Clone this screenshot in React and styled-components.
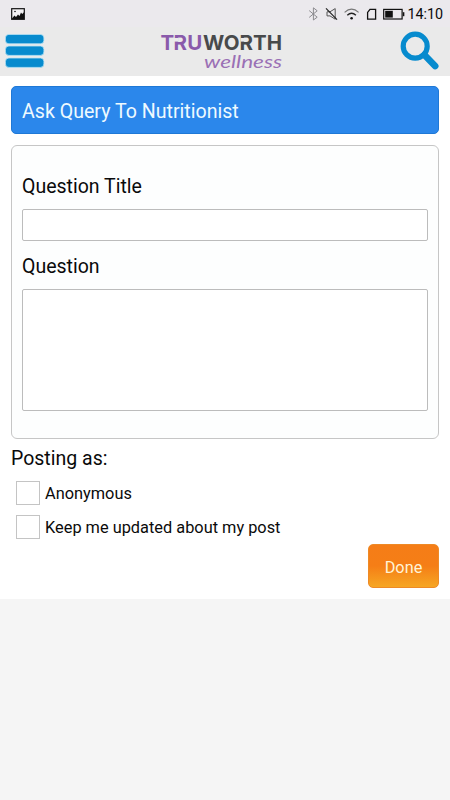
import React, { Component } from "react";
import styled, { createGlobalStyle } from "styled-components";

const GlobalStyle = createGlobalStyle`
  * {
    box-sizing: border-box;
  }

  body {
    margin: 0;
    background-color: #f5f5f5;
    color: #0a0a0a;
    font-family: Roboto, sans-serif;
  }
`;

const Wrapper = styled.div`
  width: 100%;
  min-height: 100vh;
  display: flex;
  flex-flow: column;
`;

const StatusBar = styled.div`
  height: 27px;
  padding: 0 7px 0 11px;
  background-color: #ebe9ed;
  display: flex;
  justify-content: space-between;
  align-items: center;
`;

const StatusIcons = styled.div`
  display: flex;
  align-items: center;
`;

const Clock = styled.div`
  margin-left: 2px;
  padding-top: 1px;
  font-size: 14.3px;
  line-height: 26px;
`;

const Header = styled.header`
  height: 49px;
  padding: 0 10px 0 5px;
  background-color: #eaeaea;
  display: flex;
  justify-content: space-between;
  align-items: flex-start;
`;

const IconButton = styled.button`
  padding: 0;
  border: none;
  background: none;
  display: flex;
`;

const MenuButton = styled(IconButton)`
  margin-top: 7px;
`;

const SearchButton = styled(IconButton)`
  margin-top: 4px;
`;

const Content = styled.main`
  height: 523px;
  padding: 10px 11px 0;
  background-color: #fff;
  display: flex;
  flex-flow: column;
`;

const Title = styled.h1`
  height: 48px;
  margin: 0 0 11px;
  padding: 0 10px;
  border: 1px solid #1f78d6;
  border-radius: 5px;
  background-color: #2b87eb;
  color: #eefaff;
  font-size: 19.6px;
  font-weight: 400;
  line-height: 50px;
`;

const Panel = styled.div`
  height: 294px;
  padding: 29px 10px 0;
  border: 1px solid #c6c6c6;
  border-radius: 6px;
  background-color: #fdfefe;
  display: flex;
  flex-flow: column;
`;

const Label = styled.label`
  font-size: 19.5px;
  line-height: 24px;
`;

const TextInput = styled.input`
  width: 100%;
  height: 32px;
  margin: 10px 0 14px;
  border: 1px solid #bcbcbc;
  border-radius: 2px;
  background-color: #fff;
`;

const TextArea = styled.textarea`
  width: 100%;
  height: 122px;
  margin: 10px 0 0;
  border: 1px solid #bcbcbc;
  border-radius: 2px;
  background-color: #fff;
  resize: none;
`;

const PostingAs = styled.div`
  margin: 8px 0 10px;
  font-size: 19.5px;
  line-height: 24px;
`;

const Option = styled.label`
  height: 24px;
  margin: 0 0 10px 5px;
  display: flex;
  align-items: center;
  font-size: 16.35px;
`;

const Checkbox = styled.input`
  appearance: none;
  width: 24px;
  height: 24px;
  margin: 0 5px 0 0;
  border: 1px solid #c4c4c4;
  background-color: #fff;
`;

const DoneButton = styled.button`
  width: 71px;
  height: 44px;
  margin-top: -5px;
  padding: 2px 0 0;
  align-self: flex-end;
  border: 1px solid #ee8a26;
  border-radius: 5px;
  background: linear-gradient(#f57d17 0%, #f57e16 50%, #f6a623 100%);
  color: #fff3d6;
  font-family: inherit;
  font-size: 16.3px;
`;

const PictureIcon = () => (
  <svg width="14" height="12" viewBox="0 0 14 12">
    <rect x="0.7" y="0.7" width="12.6" height="10.6" fill="#f5f4f6" stroke="#111" strokeWidth="1.2" />
    <path d="M1 10.5 3.5 7.5 5 9l2-2.5L8.5 8 10 4.5 11.2 6 13 4.2V11H1z" fill="#111" />
    <circle cx="4" cy="3.5" r="0.8" fill="#111" />
  </svg>
);

const SystemIcons = () => (
  <svg width="98" height="16" viewBox="0 0 98 16" fill="none">
    <path d="M2.2 4.6 10.2 11.2 6.4 14V1.8l3.8 3L2.2 11.4" stroke="#8c8b90" />
    <path d="M20 5.8h3l5.2-3.2v10.6L23 9.9h-3z" stroke="#555" />
    <path d="M19 2.4l11 11.2" stroke="#222" strokeWidth="1.2" />
    <path d="M37.6 6.4c4.4-4 9.6-4 14 0" stroke="#777" strokeWidth="1.2" />
    <path d="M40.3 9.2c3-2.6 5.6-2.6 8.6 0" stroke="#222" strokeWidth="1.4" />
    <circle cx="44.6" cy="12.2" r="1.3" fill="#111" />
    <path d="M63 3.4h5.6v9.8h-8V6.4z" stroke="#111" strokeWidth="1.3" />
    <rect x="76.7" y="3.4" width="18.4" height="9.6" stroke="#111" strokeWidth="1.2" />
    <path d="M78.2 4.8h7.6v6.8h-7.6z" fill="#111" />
    <path d="M96.6 6.2v4" stroke="#111" strokeWidth="1.5" />
  </svg>
);

const MenuIcon = () => (
  <svg width="40" height="36" viewBox="0 0 40 36">
    <g fill="#078bce" stroke="#b9e5f5" strokeWidth="0.8">
      <rect x="0.4" y="0.4" width="38.5" height="9.4" rx="3.5" />
      <rect x="0.4" y="12" width="38.5" height="9.4" rx="3.5" />
      <rect x="0.4" y="24" width="38.5" height="9.4" rx="3.5" />
    </g>
  </svg>
);

const SearchIcon = () => (
  <svg width="40" height="40" viewBox="0 0 40 40" fill="none" stroke="#078bce">
    <circle cx="15.2" cy="15.2" r="12" strokeWidth="5.2" />
    <path d="m24.5 24 10.6 11" strokeWidth="6.8" strokeLinecap="round" />
  </svg>
);

const Logo = () => (
  <svg width="126" height="44" viewBox="0 0 126 44">
    <g fontFamily="Inter, sans-serif" fontSize="20.5" fontWeight="700">
      <text x="0.5 13.5 27.2" y="23" fill="#8a5aab">
        TRU
      </text>
      <text x="43" y="23" textLength="79" lengthAdjust="spacingAndGlyphs" fill="#484a4b">
        WORTH
      </text>
    </g>
    {/* notches that open the stem of each R */}
    <g fill="#eaeaea">
      <rect x="14" y="11" width="4.6" height="3.6" />
      <rect x="80.6" y="11" width="4.4" height="3.6" />
    </g>
    <text
      x="44"
      y="40.5"
      textLength="78"
      lengthAdjust="spacingAndGlyphs"
      fontFamily="Lato, sans-serif"
      fontSize="18"
      fontStyle="italic"
      fontWeight="400"
      fill="#9a70b5"
    >
      wellness
    </text>
  </svg>
);

class App extends Component {
  render() {
    return (
      <Wrapper>
        <GlobalStyle />
        <StatusBar>
          <PictureIcon />
          <StatusIcons>
            <SystemIcons />
            <Clock>14:10</Clock>
          </StatusIcons>
        </StatusBar>
        <Header>
          <MenuButton aria-label="Menu">
            <MenuIcon />
          </MenuButton>
          <Logo />
          <SearchButton aria-label="Search">
            <SearchIcon />
          </SearchButton>
        </Header>
        <Content>
          <Title>Ask Query To Nutritionist</Title>
          <Panel>
            <Label htmlFor="title">Question Title</Label>
            <TextInput id="title" />
            <Label htmlFor="question">Question</Label>
            <TextArea id="question" />
          </Panel>
          <PostingAs>Posting as:</PostingAs>
          <Option>
            <Checkbox type="checkbox" />
            Anonymous
          </Option>
          <Option>
            <Checkbox type="checkbox" />
            Keep me updated about my post
          </Option>
          <DoneButton>Done</DoneButton>
        </Content>
      </Wrapper>
    );
  }
}

export default App;
